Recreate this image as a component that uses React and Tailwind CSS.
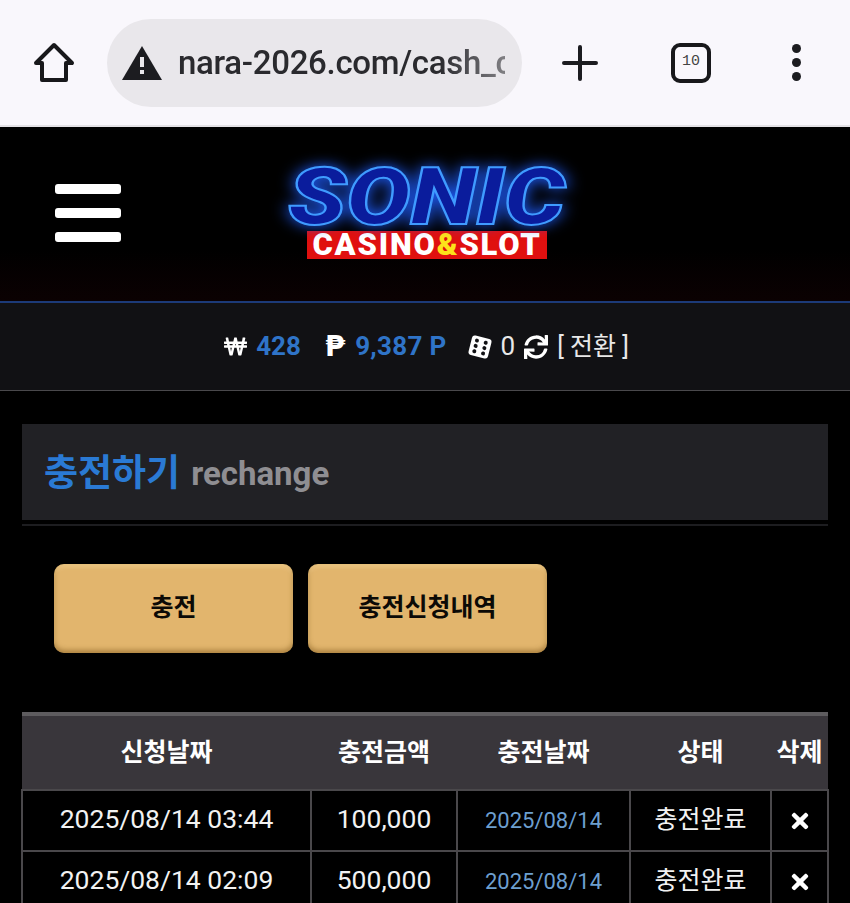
import React from 'react'
import { FaSync, FaTimes, FaWonSign } from 'react-icons/fa'

const rows = [
    { applied: '2025/08/14 03:44', amount: '100,000', done: '2025/08/14' },
    { applied: '2025/08/14 02:09', amount: '500,000', done: '2025/08/14' },
];

const BrowserBar = () => (
    <div className="h-[127px] bg-[#f9f7fc] flex items-center relative border-b-2 border-[#e4e2e6]">
        <svg width="42" height="42" viewBox="0 0 42 42" className="ml-[33px]" fill="none" stroke="#18181b" strokeWidth="4" strokeLinejoin="round" strokeLinecap="round">
            <path d="M21 3 L39 21 H33 V38 H9 V21 H3 Z" />
        </svg>
        <div className="ml-[32px] w-[415px] h-[88px] rounded-[44px] bg-[#e9e7eb] flex items-center pl-[15px]">
            <svg width="40" height="36" viewBox="0 0 40 36">
                <path d="M20 1 L40 35 H0 Z" fill="#1c1c20" />
                <rect x="18" y="12" width="4" height="10" fill="#e9e7eb" />
                <rect x="18" y="25" width="4" height="4" fill="#e9e7eb" />
            </svg>
            <div className="ml-[16px] w-[327px] overflow-hidden whitespace-nowrap text-[33px] font-medium tracking-[-0.3px] text-[#2a2a2e] [mask-image:linear-gradient(90deg,#000_80%,rgba(0,0,0,0.55)_100%)] font-['Roboto',sans-serif]">
                nara-2026.com/cash_charge
            </div>
        </div>
        <svg width="36" height="36" viewBox="0 0 36 36" className="ml-[40px]" stroke="#1c1c20" strokeWidth="4" strokeLinecap="round">
            <path d="M18 2 V34 M2 18 H34" />
        </svg>
        <div className="ml-[73px] w-[40px] h-[40px] rounded-[9px] border-[4px] border-[#18181b] flex items-center justify-center text-[15px] text-[#444] font-['Liberation_Mono',monospace]">
            10
        </div>
        <div className="ml-[81px] flex flex-col gap-[5px]">
            <span className="w-[9px] h-[9px] rounded-full bg-[#1c1c20]" />
            <span className="w-[9px] h-[9px] rounded-full bg-[#1c1c20]" />
            <span className="w-[9px] h-[9px] rounded-full bg-[#1c1c20]" />
        </div>
    </div>
);

const Logo = () => (
    <div className="ml-[161px] w-[290px] -mt-[7px] flex flex-col items-center">
        <div className="h-[68px] leading-[68px] text-[80px] font-black italic text-[#0a1c9c] [-webkit-text-stroke:2px_#3f9bff] scale-x-[1.2] drop-shadow-[0_0_7px_#1e5cff] font-['Roboto',sans-serif]">
            SONIC
        </div>
        <div className="w-[240px] h-[28px] bg-[#e0100f] flex items-center justify-center text-[31px] leading-none font-black text-white tracking-[1.8px] whitespace-nowrap font-['Roboto',sans-serif]">
            CASINO<span className="text-[#fde21a]">&amp;</span>SLOT
        </div>
    </div>
);

const Header = () => (
    <div className="h-[176px] bg-[linear-gradient(180deg,#000_70%,#0b0102_100%)] border-b-2 border-[#1c3a78] flex items-center pl-[55px]">
        <div className="flex flex-col gap-[14px] w-[66px] -mt-[2px]">
            <span className="h-[10px] rounded-[3px] bg-white" />
            <span className="h-[10px] rounded-[3px] bg-white" />
            <span className="h-[10px] rounded-[3px] bg-white" />
        </div>
        <Logo />
    </div>
);

const StatsBar = () => (
    <div className="h-[88px] pl-[3px] bg-[#111114] border-b border-[#4a494c] flex items-center justify-center text-[26px] text-[#e8e8e8] font-['Roboto','Noto_Sans_CJK_KR',sans-serif]">
        <FaWonSign className="text-white" size={23} />
        <span className="ml-[9px] font-bold text-[#2f74c8]">428</span>
        <span className="ml-[24px] text-[29px] leading-none font-bold text-white font-['DejaVu_Sans',sans-serif]">₱</span>
        <span className="ml-[10px] font-bold tracking-[0.3px] text-[#2f74c8]">9,387 P</span>
        <svg width="26" height="26" viewBox="0 0 26 26" className="ml-[20px]">
            <rect x="3" y="3" width="20" height="20" rx="3" fill="#fff" transform="rotate(14 13 13)" />
            <g fill="#111114" transform="rotate(14 13 13)">
                <circle cx="8.5" cy="7.5" r="2" />
                <circle cx="8.5" cy="13" r="2" />
                <circle cx="8.5" cy="18.5" r="2" />
                <circle cx="17.5" cy="7.5" r="2" />
                <circle cx="17.5" cy="13" r="2" />
                <circle cx="17.5" cy="18.5" r="2" />
            </g>
        </svg>
        <span className="ml-[8px]">0</span>
        <FaSync className="ml-[9px] text-white" size={24} />
        <span className="ml-[9px] text-[25px]">[ 전환 ]</span>
    </div>
);

const OrangeButton = ({ children }) => (
    <button className="w-[239px] h-[89px] pb-[6px] rounded-[10px] bg-[#e2b56d] shadow-[inset_0_-3px_5px_rgba(120,80,20,0.5),inset_0_3px_4px_rgba(255,230,170,0.4)] text-[25px] font-bold text-[#0c0a06] font-['Noto_Sans_CJK_KR',sans-serif]">
        {children}
    </button>
);

const HistoryTable = () => (
    <table className="w-[806px] -ml-px table-fixed border-collapse text-[#f2f2f2] font-['Roboto','Noto_Sans_CJK_KR',sans-serif]">
        <colgroup>
            <col className="w-[289px]" />
            <col className="w-[146px]" />
            <col className="w-[173px]" />
            <col className="w-[141px]" />
            <col className="w-[57px]" />
        </colgroup>
        <thead>
            <tr className="h-[76px] bg-[#39363b] border-t-4 border-[#5e5c5f] text-[25px] font-bold text-white">
                <th className="font-bold">신청날짜</th>
                <th className="font-bold">충전금액</th>
                <th className="font-bold">충전날짜</th>
                <th className="font-bold">상태</th>
                <th className="font-bold whitespace-nowrap">삭제</th>
            </tr>
        </thead>
        <tbody>
            {rows.map((row) => (
                <tr key={row.applied} className="h-[61px] text-center">
                    <td className="border-2 border-[#4a484b] pb-[3px] text-[26.5px]">{row.applied}</td>
                    <td className="border-2 border-[#4a484b] pb-[3px] text-[26.5px]">{row.amount}</td>
                    <td className="border-2 border-[#4a484b] text-[22px] text-[#6d9fcf]">{row.done}</td>
                    <td className="border-2 border-[#4a484b] pb-[2px] text-[25px]">충전완료</td>
                    <td className="border-2 border-[#4a484b]">
                        <FaTimes className="mx-auto text-white" size={24} />
                    </td>
                </tr>
            ))}
        </tbody>
    </table>
);

const App = () => {
    return (
        <div className="w-[850px] h-[903px] overflow-hidden bg-black">
            <BrowserBar />
            <Header />
            <StatsBar />
            <div className="pl-[22px] pr-[22px] pt-[33px]">
                <div className="h-[96px] bg-[#212125] flex items-center pt-[4px] pl-[22px] font-['Roboto','Noto_Sans_CJK_KR',sans-serif]">
                    <span className="text-[37px] font-bold text-[#2a7ad4]">충전하기</span>
                    <span className="ml-[11px] text-[33px] font-bold text-[#8f8e92]">rechange</span>
                </div>
                <div className="mt-[4px] h-[2px] bg-[#1d1d20]" />
                <div className="mt-[38px] ml-[32px] flex gap-[15px]">
                    <OrangeButton>충전</OrangeButton>
                    <OrangeButton>충전신청내역</OrangeButton>
                </div>
                <div className="mt-[59px]">
                    <HistoryTable />
                </div>
            </div>
        </div>
    );
};

export default App;
